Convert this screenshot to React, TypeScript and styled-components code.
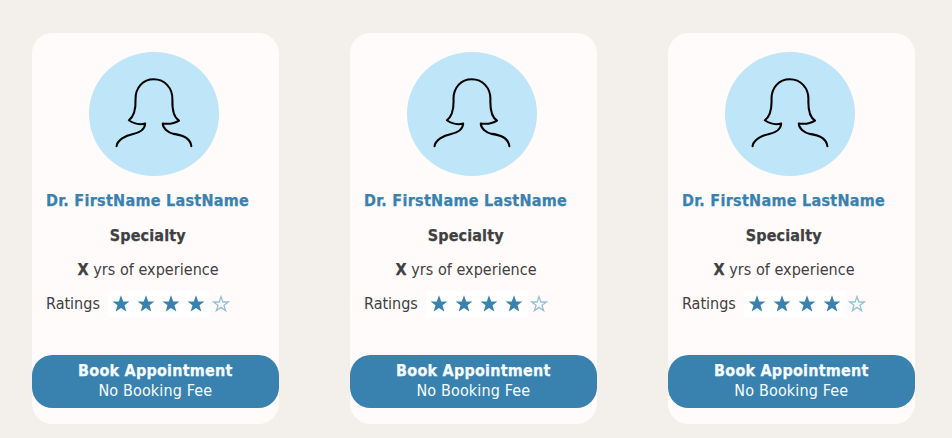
import React from "react";
import styled, { createGlobalStyle } from "styled-components";

const GlobalStyle = createGlobalStyle`
  *, *::before, *::after { box-sizing: border-box; }
  html, body { margin: 0; background: #f3f0eb; }
  body {
    overflow: hidden;
    color: #404042;
    font-family: "DejaVu Sans Condensed", "DejaVu Sans", sans-serif;
    font-stretch: condensed;
    font-size: 16px;
    line-height: 20px;
  }
`;

const Page = styled.main`
  display: grid;
  grid-template-columns: repeat(3, 246.7px);
  column-gap: 71.3px;
  align-items: start;
  height: 438px;
  padding: 33px 0 0 32px;
`;

const Card = styled.article`
  display: flex;
  flex-direction: column;
  height: 391px;
  padding-top: 19px;
  border-radius: 20.5px;
  background: #fffbfa;
`;

const Avatar = styled.div`
  width: 129.6px;
  height: 123.5px;
  margin-left: 57.1px;
  border-radius: 50%;
  background: #bfe5f8;
`;

const Portrait = styled.svg`
  display: block;
  width: 100%;
  height: 100%;
  fill: none;
  stroke: #000;
  stroke-width: 6.2;
  stroke-linecap: round;
  stroke-linejoin: round;
`;

const Line = styled.p<{ $left: number; $gap: number; $tracking?: number }>`
  margin: ${({ $gap }) => $gap}px 0 0 ${({ $left }) => $left}px;
  height: 20px;
  white-space: pre;
  letter-spacing: ${({ $tracking = 0 }) => $tracking}px;
`;

const NameLine = styled(Line)`
  color: #3981af;
  font-weight: 700;
  -webkit-text-stroke: 0.25px currentColor;
`;

const Strong = styled.strong`
  font-weight: 700;
  -webkit-text-stroke: 0.25px currentColor;
`;

const Rating = styled.div`
  display: flex;
  align-items: center;
  height: 28px;
  margin: 10px 0 0 14px;
`;

const RatingLabel = styled.span`
  width: 61.8px;
`;

const FilledStars = styled.span`
  display: flex;
  width: 102px;
  height: 27px;
  align-items: center;
  padding-left: 4.7px;
  gap: 6.8px;
  background: #fff;
`;

const Star = styled.svg<{ $empty?: boolean }>`
  flex: none;
  width: 18px;
  height: 18px;
  margin-left: ${({ $empty }) => ($empty ? 2 : 0)}px;
  fill: ${({ $empty }) => ($empty ? "none" : "#3981af")};
  stroke: ${({ $empty }) => ($empty ? "#96c1d6" : "none")};
  stroke-width: 1.3;
`;

const BookButton = styled.button`
  display: flex;
  flex-direction: column;
  align-items: center;
  width: 100%;
  height: 52.5px;
  margin: 37px 0 0;
  padding: 6px 0 0;
  border: 0;
  border-radius: 20.5px;
  background: #3981af;
  color: #f5fdff;
  font: inherit;
`;

const ButtonText = styled.span<{ $tracking: number }>`
  height: 20px;
  letter-spacing: ${({ $tracking }) => $tracking}px;
`;

const ButtonTitle = styled(ButtonText)`
  font-weight: 700;
  -webkit-text-stroke: 0.25px currentColor;
`;

function RatingStar({ empty = false }: { empty?: boolean }) {
  return (
    <Star viewBox="0 0 18 18" $empty={empty} aria-hidden="true">
      <path d={empty
        ? "M9 1.6 L10.9 7 H16.3 L12 10.3 L13.6 15.6 L9 12.4 L4.4 15.6 L6 10.3 L1.7 7 H7.1 Z"
        : "M9 .3 L11.2 6.4 H17.4 L12.5 10.3 L14.3 16.5 L9 12.9 L3.7 16.5 L5.5 10.3 L.6 6.4 H6.8 Z"} />
    </Star>
  );
}

function DoctorCard() {
  return (
    <Card>
      <Avatar>
        <Portrait viewBox="207 96 390 371" preserveAspectRatio="none" aria-hidden="true">
          <path d="M290 379 C292 361 316 347 340 342 C361 338 375 326 376 311 C360 315 341 311 327 301 C343 289 348 266 347 239 C346 202 370 178 402 178 C435 178 459 204 458 239 C457 269 463 293 478 302 C464 311 446 313 429 311 C429 325 444 338 462 342 C493 346 513 359 515 379" />
        </Portrait>
      </Avatar>
      <NameLine $gap={15.5} $left={14} $tracking={0.28}>Dr. FirstName LastName</NameLine>
      <Line $gap={15} $left={77.8} $tracking={0.12}><Strong>Specialty</Strong></Line>
      <Line $gap={14} $left={45.5} $tracking={0.04}><Strong>X</Strong> yrs of experience</Line>
      <Rating aria-label="4 out of 5 stars">
        <RatingLabel>Ratings</RatingLabel>
        <FilledStars>
          <RatingStar /><RatingStar /><RatingStar /><RatingStar />
        </FilledStars>
        <RatingStar empty />
      </Rating>
      <BookButton type="button">
        <ButtonTitle $tracking={0.22}>Book Appointment</ButtonTitle>
        <ButtonText $tracking={0.14}>No Booking Fee</ButtonText>
      </BookButton>
    </Card>
  );
}

export default function App() {
  return (
    <>
      <GlobalStyle />
      <Page>
        <DoctorCard />
        <DoctorCard />
        <DoctorCard />
      </Page>
    </>
  );
}
